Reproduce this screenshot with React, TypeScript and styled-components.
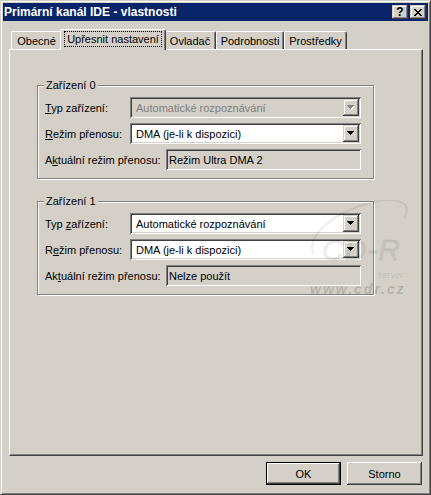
import React from 'react';
import styled, { createGlobalStyle, css } from 'styled-components';

const GlobalStyle = createGlobalStyle`
  html, body {
    margin: 0;
    padding: 0;
    background: #d4d0c8;
  }
  body {
    font-family: "Liberation Sans", Arial, sans-serif;
    font-size: 11px;
    color: #000;
  }
`;

// classic 3D edges
const raisedEdge = css`
  box-shadow: inset -1px -1px #404040, inset 1px 1px #fff, inset -2px -2px #808080, inset 2px 2px #d4d0c8;
`;

const smallRaisedEdge = css`
  box-shadow: inset -1px -1px #404040, inset 1px 1px #d4d0c8, inset -2px -2px #808080, inset 2px 2px #fff;
`;

const sunkenEdge = css`
  box-shadow: inset 1px 1px #808080, inset -1px -1px #fff, inset 2px 2px #404040, inset -2px -2px #d4d0c8;
`;

const Window = styled.div`
  box-sizing: border-box;
  width: 431px;
  height: 495px;
  padding: 2px;
  border: 1px solid;
  border-color: #d4d0c8 #404040 #404040 #d4d0c8;
  box-shadow: inset 1px 1px #fff, inset -1px -1px #808080;
  background: #d4d0c8;
  display: flex;
  flex-direction: column;
`;

const TitleBar = styled.div`
  height: 18px;
  background: #0a246a;
  display: flex;
  align-items: center;
  padding: 0 2px 0 1px;
`;

const Title = styled.div`
  color: #fff;
  font-weight: bold;
  font-size: 12px;
  white-space: nowrap;
`;

const CaptionButtons = styled.div`
  margin-left: auto;
  display: flex;
  gap: 2px;
`;

const CaptionButton = styled.div`
  width: 16px;
  height: 14px;
  background: #d4d0c8;
  ${smallRaisedEdge};
  display: flex;
  align-items: center;
  justify-content: center;
  font-weight: bold;
  font-size: 12px;
  line-height: 14px;
`;

const Body = styled.div`
  flex: 1;
  padding: 8px 5px 0 6px;
  display: flex;
  flex-direction: column;
`;

const TabRow = styled.div`
  display: flex;
  align-items: flex-end;
  height: 21px;
  margin-bottom: -1px;
  padding-left: 2px;
  position: relative;
  z-index: 1;
`;

const Tab = styled.div<{ $width: number; $active?: boolean }>`
  box-sizing: border-box;
  width: ${p => p.$width}px;
  height: ${p => (p.$active ? 21 : 18)}px;
  margin: ${p => (p.$active ? '0 -2px' : '0 0 1px 0')};
  position: relative;
  z-index: ${p => (p.$active ? 2 : 1)};
  background: #d4d0c8;
  border-top: 1px solid #fff;
  border-left: 1px solid #fff;
  border-right: 1px solid #404040;
  border-radius: 2px 2px 0 0;
  box-shadow: inset -1px 0 #808080;
  padding: 1px 3px 0 3px;
  display: flex;
  justify-content: center;
`;

const TabLabel = styled.span<{ $focused?: boolean }>`
  box-sizing: border-box;
  height: 16px;
  line-height: 14px;
  padding: 0 2px;
  border: 1px dotted ${p => (p.$focused ? '#000' : 'transparent')};
  white-space: nowrap;
`;

const Panel = styled.div`
  box-sizing: border-box;
  position: relative;
  width: 414px;
  height: 407px;
  border-top: 1px solid #fff;
  border-left: 1px solid #fff;
  border-right: 1px solid #404040;
  border-bottom: 1px solid #404040;
  box-shadow: inset -1px -1px #808080;
  padding: 29px 0 0 27px;
  display: flex;
  flex-direction: column;
  gap: 16px;
`;

const Group = styled.fieldset`
  box-sizing: border-box;
  width: 337px;
  min-inline-size: 0;
  margin: 0;
  padding: 5px 0 8px 7px;
  border: 1px solid #808080;
  box-shadow: 1px 1px #fff, inset 1px 1px #fff;
  display: flex;
  flex-direction: column;
  gap: 5px;
`;

const Legend = styled.legend`
  padding: 0 2px;
  margin-left: -1px;
  line-height: 13px;
  background: #d4d0c8;
`;

const Row = styled.div`
  display: flex;
  align-items: center;
  height: 21px;
`;

const Label = styled.span<{ $width: number }>`
  width: ${p => p.$width}px;
  flex: none;
  white-space: nowrap;
`;

const Key = styled.u`
  text-decoration-thickness: 1px;
  text-underline-offset: 1px;
`;

const Combo = styled.div<{ $disabled?: boolean }>`
  box-sizing: border-box;
  width: 231px;
  height: 21px;
  padding: 2px;
  background: ${p => (p.$disabled ? '#d4d0c8' : '#fff')};
  color: ${p => (p.$disabled ? '#808080' : '#000')};
  ${sunkenEdge};
  display: flex;
  align-items: center;
`;

const ComboText = styled.span`
  flex: 1;
  padding-left: 4px;
  white-space: nowrap;
`;

const DropButton = styled.div`
  width: 16px;
  height: 17px;
  background: #d4d0c8;
  ${smallRaisedEdge};
  display: flex;
  align-items: center;
  justify-content: center;
`;

const ReadOnlyField = styled.div`
  box-sizing: border-box;
  width: 195px;
  height: 21px;
  padding: 0 3px;
  background: #d4d0c8;
  ${sunkenEdge};
  display: flex;
  align-items: center;
  white-space: nowrap;
`;

const ButtonRow = styled.div`
  display: flex;
  justify-content: flex-end;
  gap: 6px;
  margin-top: 6px;
  padding-right: 1px;
`;

const PushButton = styled.div<{ $default?: boolean }>`
  box-sizing: border-box;
  width: 75px;
  height: 23px;
  background: #d4d0c8;
  display: flex;
  align-items: center;
  justify-content: center;
  ${p =>
    p.$default
      ? css`
          border: 1px solid #000;
          box-shadow: inset -1px -1px #404040, inset 1px 1px #fff, inset -2px -2px #808080;
        `
      : raisedEdge}
`;

const Watermark = styled.svg`
  position: absolute;
  left: 290px;
  top: 150px;
  pointer-events: none;
  font-family: "Liberation Sans", Arial, sans-serif;
  font-style: italic;
`;

const Arrow: React.FC<{ disabled?: boolean }> = ({ disabled }) => {
  const d = 'M0 0h7v1H0z M1 1h5v1H1z M2 2h3v1H2z M3 3h1v1H3z';
  return (
    <svg width="8" height="5" viewBox="0 0 8 5">
      {disabled && <path d={d} fill="#fff" transform="translate(1 1)" />}
      <path d={d} fill={disabled ? '#808080' : '#000'} />
    </svg>
  );
};

const CloseGlyph = () => (
  <svg width="8" height="7" viewBox="0 0 8 7">
    <path
      d="M0 0h2v1h1v1h2V1h1V0h2v1H7v1H6v1H5v1h1v1h1v1h1v1H6V6H5V5H3v1H2v1H0V6h1V5h1V4h1V3H2V2H1V1H0z"
      fill="#000"
    />
  </svg>
);

interface DeviceProps {
  title: string;
  typeLabel: React.ReactNode;
  modeLabel: React.ReactNode;
  currentLabel: React.ReactNode;
  typeDisabled?: boolean;
  current: string;
}

const DeviceGroup: React.FC<DeviceProps> = ({ title, typeLabel, modeLabel, currentLabel, typeDisabled, current }) => (
  <Group>
    <Legend>{title}</Legend>
    <Row>
      <Label $width={85}>{typeLabel}</Label>
      <Combo $disabled={typeDisabled}>
        <ComboText>Automatické rozpoznávání</ComboText>
        <DropButton>
          <Arrow disabled={typeDisabled} />
        </DropButton>
      </Combo>
    </Row>
    <Row>
      <Label $width={85}>{modeLabel}</Label>
      <Combo>
        <ComboText>DMA (je-li k dispozici)</ComboText>
        <DropButton>
          <Arrow />
        </DropButton>
      </Combo>
    </Row>
    <Row>
      <Label $width={121}>{currentLabel}</Label>
      <ReadOnlyField>{current}</ReadOnlyField>
    </Row>
  </Group>
);

const tabs = [
  { name: 'Obecné', width: 51 },
  { name: 'Upřesnit nastavení', width: 106, active: true },
  { name: 'Ovladač', width: 52 },
  { name: 'Podrobnosti', width: 68 },
  { name: 'Prostředky', width: 63 },
];

const App: React.FC = () => (
  <>
    <GlobalStyle />
    <Window>
      <TitleBar>
        <Title>Primární kanál IDE - vlastnosti</Title>
        <CaptionButtons>
          <CaptionButton>?</CaptionButton>
          <CaptionButton>
            <CloseGlyph />
          </CaptionButton>
        </CaptionButtons>
      </TitleBar>
      <Body>
        <TabRow>
          {tabs.map(t => (
            <Tab key={t.name} $width={t.width} $active={t.active}>
              <TabLabel $focused={t.active}>{t.name}</TabLabel>
            </Tab>
          ))}
        </TabRow>
        <Panel>
          <DeviceGroup
            title="Zařízení 0"
            typeDisabled
            typeLabel={<><Key>T</Key>yp zařízení:</>}
            modeLabel={<><Key>R</Key>ežim přenosu:</>}
            currentLabel={<>A<Key>k</Key>tuální režim přenosu:</>}
            current="Režim Ultra DMA 2"
          />
          <DeviceGroup
            title="Zařízení 1"
            typeLabel={<>Typ <Key>z</Key>ařízení:</>}
            modeLabel={<>R<Key>e</Key>žim přenosu:</>}
            currentLabel={<>Ak<Key>t</Key>uální režim přenosu:</>}
            current="Nelze použít"
          />
          <Watermark width="120" height="100" viewBox="0 0 120 100">
            <path
              d="M14 54 C 6 44, 20 20, 60 6 C 95 -6, 115 2, 104 18"
              fill="none"
              stroke="rgba(0,0,0,0.07)"
              strokeWidth="2"
            />
            <text
              x="22"
              y="60"
              fontSize="30"
              letterSpacing="1"
              fill="rgba(0,0,0,0.06)"
              stroke="rgba(0,0,0,0.1)"
              strokeWidth="0.8"
            >
              CD-R
            </text>
            <text x="78" y="78" fontSize="9" fill="rgba(0,0,0,0.13)">
              server
            </text>
            <text x="10" y="94" fontSize="14" fontWeight="bold" letterSpacing="2" fill="rgba(0,0,0,0.16)">
              www.cdr.cz
            </text>
          </Watermark>
        </Panel>
        <ButtonRow>
          <PushButton $default>OK</PushButton>
          <PushButton>Storno</PushButton>
        </ButtonRow>
      </Body>
    </Window>
  </>
);

export default App;
